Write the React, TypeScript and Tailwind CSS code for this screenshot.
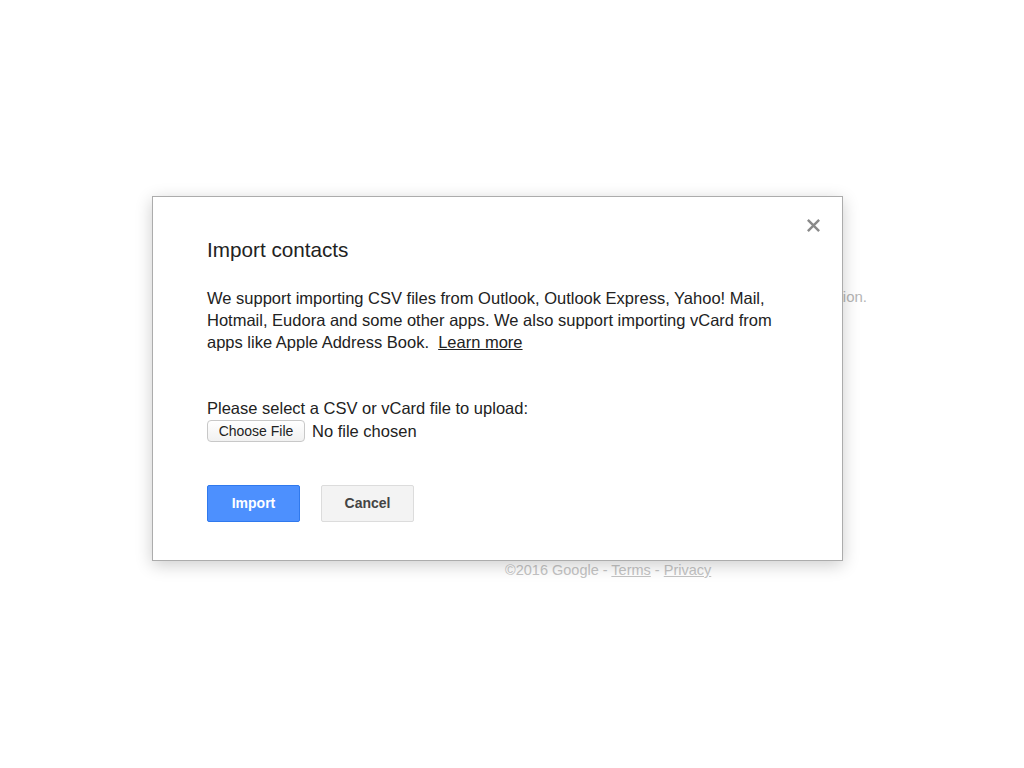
export default function App() {
  return (
    <div
      className="relative h-[768px] w-[1024px] overflow-hidden bg-white text-[#222]"
      style={{ fontFamily: '"Liberation Sans", Arial, Helvetica, sans-serif' }}
    >
      {/* page behind the dialog */}
      <div className="pt-[286px]">
        <p className="ml-[800px] w-[67px] text-right text-[15px] leading-[22px] text-[#b5b5b5]">
          ection.
        </p>
      </div>
      <div className="ml-[505px] mt-[252px] text-[14.5px] leading-[20px] text-[#c4c4c4]">
        ©2016 Google - <span className="underline">Terms</span> -{" "}
        <span className="underline">Privacy</span>
      </div>

      {/* dialog */}
      <div className="absolute left-[152px] top-[196px] h-[365px] w-[691px] border border-[#acacac] bg-white pl-[54px] pt-[40px] shadow-[0_4px_16px_rgba(0,0,0,0.2)]">
        <button className="absolute right-[21px] top-[21px] text-[#8a8a8a]" aria-label="Close">
          <svg width="15" height="15" viewBox="0 0 16 16">
            <path d="M2 2L14 14M14 2L2 14" stroke="currentColor" strokeWidth="2.6" />
          </svg>
        </button>
        <h1 className="text-[20.7px] leading-[26px] text-[#222]">Import contacts</h1>
        <p className="mt-[24px] w-[590px] text-[16.5px] leading-[22px] text-[#222]">
          We support importing CSV files from Outlook, Outlook Express, Yahoo! Mail, Hotmail,
          Eudora and some other apps. We also support importing vCard from apps like Apple Address
          Book.&nbsp; <span className="underline">Learn more</span>
        </p>
        <p className="mt-[44px] text-[16.5px] leading-[22px]">
          Please select a CSV or vCard file to upload:
        </p>
        <div className="mt-[1px] flex items-center gap-[7px]">
          <button className="h-[22px] w-[98px] rounded-[4px] border border-[#c8c8c8] bg-gradient-to-b from-white to-[#f1f1f1] text-[14px] leading-[20px] text-[#222]">
            Choose File
          </button>
          <span className="text-[16.5px] leading-[22px]">No file chosen</span>
        </div>
        <div className="mt-[43px] flex gap-[21px]">
          <button className="h-[37px] w-[93px] rounded-[2px] border border-[#3079ed] bg-[#4d90fe] text-[14px] font-bold text-white">
            Import
          </button>
          <button className="h-[37px] w-[93px] rounded-[2px] border border-[#dcdcdc] bg-[#f3f3f3] text-[14px] font-bold text-[#444]">
            Cancel
          </button>
        </div>
      </div>
    </div>
  );
}
